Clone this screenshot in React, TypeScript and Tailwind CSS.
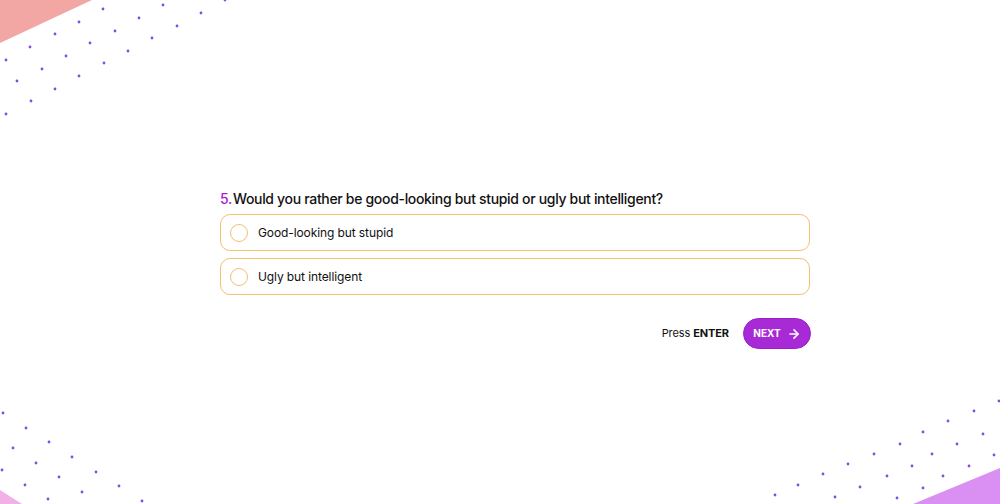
import { ArrowRight } from "lucide-react";

const topDots: [number, number][] = [
  [103, 9], [79, 22], [55, 34], [30, 47], [6, 60],
  [163, 5], [139, 18], [115, 31], [90, 43], [66, 56], [42, 69], [17, 81],
  [225, 0], [201, 13], [177, 26], [152, 38], [128, 51], [104, 63], [79, 76], [55, 89], [31, 101], [6, 114],
];

const leftDots: [number, number][] = [
  [3, 413], [26, 428], [49, 442], [72, 457], [96, 472], [119, 486], [142, 501],
  [13, 448], [36, 463], [59, 477], [82, 492],
  [2, 470], [25, 485], [48, 499],
];

const rightDots: [number, number][] = [
  [775, 495], [798, 485], [823, 474], [848, 464], [874, 454], [900, 444], [923, 432], [948, 421], [974, 411], [999, 401],
  [835, 497], [860, 487], [887, 476], [912, 466], [932, 454], [957, 444], [983, 434],
  [897, 498], [923, 488], [943, 476], [969, 466], [994, 455],
];

function Decorations() {
  return (
    <svg className="pointer-events-none absolute inset-0" width="1000" height="504" viewBox="0 0 1000 504">
      <polygon points="0,0 92,0 0,43" fill="#f2a7a4" />
      <polygon points="0,490 22,504 0,504" fill="#f2b1e6" />
      <polygon points="913,504 1000,468 1000,504" fill="#da90f2" />
      {[...topDots, ...leftDots, ...rightDots].map(([x, y], i) => (
        <circle key={i} cx={x} cy={y} r="1.4" fill="#7c4fe0" />
      ))}
    </svg>
  );
}

function Option({ label }: { label: string }) {
  return (
    <button className="flex h-[37px] w-full items-center gap-[10px] rounded-[10px] border border-[#f1c070] bg-white pl-[9px] pr-[10px] text-left">
      <span className="h-[18px] w-[18px] rounded-full border border-[#f1c070]" />
      <span className="text-[12px] tracking-[-0.1px] text-[#111]">{label}</span>
    </button>
  );
}

export default function App() {
  return (
    <div
      className="relative h-[504px] w-[1000px] overflow-hidden bg-white"
      style={{ fontFamily: "Inter, 'Noto Sans', sans-serif" }}
    >
      <Decorations />
      <div className="relative pl-[220px] pt-[189px]">
        <div className="w-[591px]">
          <h1 className="text-[14px] font-medium leading-[20px] tracking-[-0.32px] text-[#111]">
            <span className="mr-[1px] text-[#a424d2]">5.</span>Would you rather be good-looking but stupid or ugly but intelligent?
          </h1>
          <div className="mt-[5px] flex flex-col gap-[7px] pr-[1px]">
            <Option label="Good-looking but stupid" />
            <Option label="Ugly but intelligent" />
          </div>
          <div className="mt-[23px] flex items-center justify-end gap-[14px]">
            <span className="text-[11px] tracking-[-0.1px] text-[#111]">
              Press <b className="font-bold">ENTER</b>
            </span>
            <button className="flex h-[31px] w-[68px] items-center justify-center gap-[6px] rounded-full border border-[#9b20c9] bg-[#a82ad6] text-[10px] font-bold text-white">
              NEXT
              <ArrowRight size={14} strokeWidth={2.75} />
            </button>
          </div>
        </div>
      </div>
    </div>
  );
}
